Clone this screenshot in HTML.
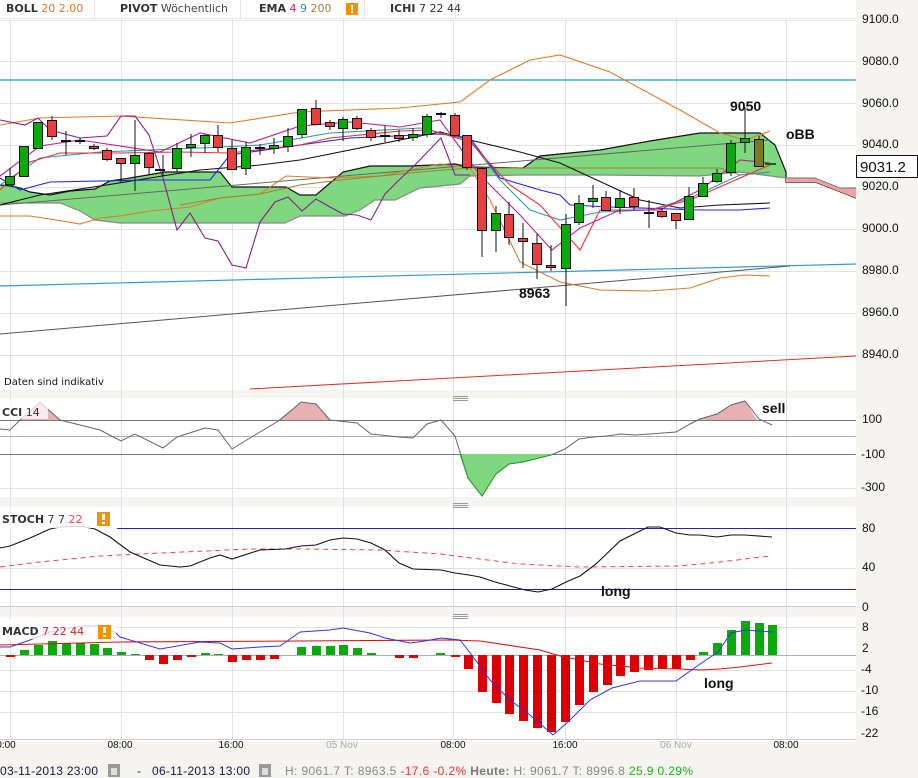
<!DOCTYPE html>
<html><head><meta charset="utf-8"><style>
html,body{margin:0;padding:0;background:#f5f4f0;width:918px;height:778px;overflow:hidden}
svg{display:block}
.ax{font-family:"Liberation Sans",sans-serif;font-size:12px;fill:#111}
.tl{font-family:"Liberation Sans",sans-serif;font-size:10px;fill:#111}
.hd{font-family:"DejaVu Sans",sans-serif;font-size:11px}
.an{font-family:"Liberation Sans",sans-serif;font-size:14px;font-weight:bold;fill:#111}
</style></head><body>
<svg width="918" height="778" viewBox="0 0 918 778" xmlns="http://www.w3.org/2000/svg">
<rect x="0" y="0" width="918" height="778" fill="#f5f4f0"/>
<rect x="0" y="0" width="856" height="390" fill="#fff"/>
<rect x="0" y="398" width="856" height="99" fill="#fff"/>
<rect x="0" y="507" width="856" height="100" fill="#fff"/>
<rect x="0" y="617" width="856" height="124" fill="#fff"/>
<g stroke="#e2e2e2" stroke-width="1">
<line x1="10.5" y1="18" x2="10.5" y2="740"/><line x1="121.5" y1="18" x2="121.5" y2="740"/><line x1="232.5" y1="18" x2="232.5" y2="740"/><line x1="343.5" y1="18" x2="343.5" y2="740"/><line x1="453.5" y1="18" x2="453.5" y2="740"/><line x1="565.5" y1="18" x2="565.5" y2="740"/><line x1="676.5" y1="18" x2="676.5" y2="740"/><line x1="786.5" y1="18" x2="786.5" y2="740"/>
<line x1="0" y1="20.5" x2="856" y2="20.5"/><line x1="0" y1="61.5" x2="856" y2="61.5"/><line x1="0" y1="103.5" x2="856" y2="103.5"/><line x1="0" y1="145.5" x2="856" y2="145.5"/><line x1="0" y1="187.5" x2="856" y2="187.5"/><line x1="0" y1="229.5" x2="856" y2="229.5"/><line x1="0" y1="271.5" x2="856" y2="271.5"/><line x1="0" y1="313.5" x2="856" y2="313.5"/><line x1="0" y1="355.5" x2="856" y2="355.5"/>
<line x1="0" y1="488.5" x2="856" y2="488.5"/>
<line x1="0" y1="568.5" x2="856" y2="568.5"/>
<line x1="0" y1="627.5" x2="856" y2="627.5"/><line x1="0" y1="670.5" x2="856" y2="670.5"/><line x1="0" y1="691.5" x2="856" y2="691.5"/><line x1="0" y1="712.5" x2="856" y2="712.5"/>
</g>
<g stroke="#c8ccd4"><line x1="0" y1="739.5" x2="856" y2="739.5"/><line x1="0" y1="606.5" x2="856" y2="606.5"/></g>
<g stroke="#999" stroke-width="1"><path d="M453 396.5h15M453 398.5h15M453 400.5h15M453 503.5h15M453 505.5h15M453 507.5h15M453 614.5h15M453 616.5h15M453 618.5h15"/></g>

<rect x="0" y="0" width="856" height="18" fill="#fff"/>
<g stroke="#e6e6e6"><line x1="94.5" y1="0" x2="94.5" y2="18"/><line x1="240.5" y1="0" x2="240.5" y2="18"/><line x1="364.5" y1="0" x2="364.5" y2="18"/><line x1="455.5" y1="0" x2="455.5" y2="18"/><line x1="0" y1="18.5" x2="856" y2="18.5"/></g>
<text x="6" y="12" class="hd"><tspan fill="#333" font-weight="bold">BOLL</tspan><tspan fill="#e07820"> 20 </tspan><tspan fill="#e07820"> 2.00</tspan></text>
<text x="120" y="12" class="hd"><tspan fill="#333" font-weight="bold">PIVOT</tspan><tspan fill="#444"> Wöchentlich</tspan></text>
<text x="259" y="12" class="hd"><tspan fill="#333" font-weight="bold">EMA</tspan><tspan fill="#c0208a">  4</tspan><tspan fill="#2a8ab0">  9</tspan><tspan fill="#a08030">  200</tspan></text>
<rect x="346" y="3" width="12" height="12" fill="#f29200"/><rect x="351" y="5" width="2" height="5" fill="#fff"/><rect x="351" y="11" width="2" height="2" fill="#fff"/>
<text x="390" y="12" class="hd"><tspan fill="#333" font-weight="bold">ICHI</tspan><tspan fill="#333">  7  22  44</tspan></text>

<line x1="0" y1="80" x2="856" y2="80" stroke="#1a9ad6" stroke-width="1.2"/>
<line x1="0" y1="286" x2="856" y2="264" stroke="#2d9ad8" stroke-width="1.2"/>
<line x1="0" y1="334" x2="790" y2="266" stroke="#555" stroke-width="1"/>
<line x1="250" y1="389" x2="856" y2="356" stroke="#e03020" stroke-width="1"/>

<polygon fill="#7fd87f" points="0,185 10,186 20,188 30,192 50,195 70,191 95,189 110,181 130,178 165,172 220,172 232,187 286,187 300,195 316,195 343,172 370,166 410,166 455,164 470,167 523,168 540,156 600,150 650,141 700,133 740,133 760,133 775,145 786,172 786,178 740,172 700,176 600,175 520,175 470,176 460,184 420,188 395,200 375,200 360,210 345,216 300,216 285,223 120,223 95,220 80,211 60,203 0,203"/>
<polyline fill="none" stroke="#111" stroke-width="1.2" points="0,185 10,186 20,188 30,192 50,195 70,191 95,189 110,181 130,178 165,172 220,172 232,187 286,187 300,195 316,195 343,172 370,166 410,166 455,164 470,167 523,168 540,156 600,150 650,141 700,133 740,133 760,133 775,145 786,172 786,182 815,182 856,198"/>
<polygon fill="#f4a0a0" points="786,178 815,178 840,188 856,188 856,198 815,182 786,182"/>
<polyline fill="none" stroke="#888" stroke-width="1.2" points="0,203 60,203 80,211 95,220 120,223 285,223 300,216 345,216 360,210 375,200 395,200 420,188 460,184 470,176 520,175 600,175 700,176 740,172 786,178 815,178 840,188 856,188"/>
<line x1="0" y1="205" x2="770" y2="140" stroke="#666" stroke-width="1"/>

<g fill="none" stroke="#e07a28" stroke-width="1.1">
<polyline points="0,125 40,118 120,116 230,123 300,112 400,108 460,102 490,80 530,60 560,55 610,72 680,110 720,133 745,140 770,131"/>
<polyline points="0,216 30,216 50,219 80,224 100,218 120,216 150,211 190,207 220,198 260,194 286,176 330,178 380,176 410,170 440,164 470,168 490,200 520,262 560,282 600,290 650,291 690,288 720,278 745,275 770,276"/>
<polyline stroke="#a08030" points="180,205 220,198 260,194 300,185 340,180 420,172 470,168 720,168 740,175 770,172"/>
</g>
<polyline fill="none" stroke="#8a1a8a" stroke-width="1.1" points="0,120 25,125 38,118 50,130 80,138 107,136 121,116 135,116 149,135 163,178 177,230 190,213 205,238 218,241 232,265 246,268 260,222 275,202 288,197 302,211 316,199 330,207 343,214 357,215 371,220 385,194 400,179 414,166 441,138 455,175 470,175"/>
<g fill="none" stroke-width="1.1">
<polyline stroke="#111" points="0,205 40,195 100,186 150,178 200,170 260,165 300,160 440,132 470,140 520,152 560,163 640,200 680,208 720,205 770,203"/>
<polyline stroke="#2222ee" points="0,178 20,190 50,182 150,180 210,180 230,155 300,145 350,138 440,134 470,138 500,178 540,190 560,195 570,205 610,207 700,210 740,210 770,208"/>
<polyline stroke="#2a9ab0" points="0,185 40,158 100,152 200,148 260,145 290,140 330,133 420,128 470,140 500,180 530,210 560,220 600,212 650,210 690,198 740,175 770,172"/>
<polyline stroke="#ff2a2a" points="0,190 30,162 60,153 120,153 180,152 230,153 300,145 330,138 400,131 430,130 470,142 510,185 540,205 580,250 600,210 650,210 690,200 740,178 770,165"/>
<polyline stroke="#c0208a" points="0,176 40,146 80,140 160,152 200,133 250,143 300,126 350,122 400,127 440,120 480,175 520,215 552,250 580,228 620,210 660,210 700,190 740,160 770,163"/>
</g>

<g stroke="#111" stroke-width="1">
<path d="M10 168V186M24 146V176M38 122V148M52 116V140M66 131V155M80 138V144M94 144V150M107 148V161M121 158V182M135 120V191M149 152V174M163 155V176M177 143V172M191 134V157M205 134V153M218 125V152M232 140V170M246 142V175M260 144V155M274 138V154M288 128V152M302 109V138M316 100V124M330 120V130M343 117V141M357 116V130M371 128V141M385 126V142M399 130V142M413 128V141M427 114V137M441 112V118M455 113V137M467 135V170M482 168V257M496 206V252M509 202V245M523 223V268M537 234V279M551 245V271M566 214V306M579 195V225M593 185V208M606 191V210M620 190V214M634 188V210M649 200V228M662 208V218M676 213V229M689 187V219M703 177V196M717 169V183M731 140V176M745 107V153M759 136V166"/>
</g>
<g stroke="#111" stroke-width="1">
<g fill="#0aaa0a">
<rect x="5.5" y="176.5" width="9" height="8"/><rect x="19.5" y="146.5" width="9" height="30"/><rect x="33.5" y="122.5" width="9" height="26"/><rect x="130.5" y="155.5" width="9" height="8"/><rect x="172.5" y="148.5" width="9" height="20"/><rect x="186.5" y="144.5" width="9" height="3"/><rect x="200.5" y="135.5" width="9" height="8"/><rect x="241.5" y="147.5" width="9" height="21"/><rect x="269.5" y="145.5" width="9" height="3"/><rect x="283.5" y="136.5" width="9" height="10"/><rect x="297.5" y="109.5" width="9" height="25"/><rect x="338.5" y="119.5" width="9" height="9"/><rect x="408.5" y="134.5" width="9" height="3"/><rect x="422.5" y="116.5" width="9" height="18"/><rect x="491.5" y="213.5" width="9" height="17"/><rect x="561.5" y="224.5" width="9" height="44"/><rect x="574.5" y="203.5" width="9" height="19"/><rect x="588.5" y="198.5" width="9" height="3"/><rect x="615.5" y="198.5" width="9" height="9"/><rect x="684.5" y="196.5" width="9" height="23"/><rect x="698.5" y="183.5" width="9" height="13"/><rect x="712.5" y="173.5" width="9" height="8"/><rect x="726.5" y="143.5" width="9" height="29"/><rect x="740.5" y="138.5" width="9" height="4"/>
</g>
<g fill="#e84040">
<rect x="47.5" y="120.5" width="9" height="16"/><rect x="89.5" y="146.5" width="9" height="2"/><rect x="102.5" y="150.5" width="9" height="9"/><rect x="116.5" y="158.5" width="9" height="5"/><rect x="144.5" y="153.5" width="9" height="14"/><rect x="213.5" y="135.5" width="9" height="12"/><rect x="227.5" y="148.5" width="9" height="21"/><rect x="311.5" y="108.5" width="9" height="16"/><rect x="325.5" y="122.5" width="9" height="4"/><rect x="352.5" y="118.5" width="9" height="10"/><rect x="366.5" y="130.5" width="9" height="7"/><rect x="394.5" y="135.5" width="9" height="3"/><rect x="450.5" y="115.5" width="9" height="20"/><rect x="462.5" y="135.5" width="9" height="32"/><rect x="477.5" y="168.5" width="9" height="62"/><rect x="504.5" y="214.5" width="9" height="23"/><rect x="518.5" y="238.5" width="9" height="3"/><rect x="532.5" y="243.5" width="9" height="21"/><rect x="546.5" y="265.5" width="9" height="2"/><rect x="601.5" y="197.5" width="9" height="13"/><rect x="629.5" y="197.5" width="9" height="9"/><rect x="657.5" y="211.5" width="9" height="5"/><rect x="671.5" y="213.5" width="9" height="7"/>
</g>
<rect x="754.5" y="139.5" width="9" height="27" fill="#7a7a22"/>
</g>
<g stroke="#111" stroke-width="2"><path d="M61 141h10M75 141h10M155 170h10M255 148h10M380 136h10M436 114h10M644 213h10"/></g>
<line x1="765" y1="164" x2="776" y2="164" stroke="#116611" stroke-width="2"/>

<text x="730" y="111" class="an">9050</text>
<text x="786" y="139" class="an">oBB</text>
<text x="519" y="298" class="an">8963</text>
<text x="4" y="385" font-family="DejaVu Sans,sans-serif" font-size="10" fill="#111">Daten sind indikativ</text>

<g class="ax">
<text x="862" y="23">9100.0</text><text x="862" y="65">9080.0</text><text x="862" y="107">9060.0</text><text x="862" y="148">9040.0</text><text x="862" y="190">9020.0</text><text x="862" y="232">9000.0</text><text x="862" y="274">8980.0</text><text x="862" y="316">8960.0</text><text x="862" y="358">8940.0</text>
</g>
<rect x="856.5" y="155.5" width="61" height="22" fill="#fff" stroke="#111"/>
<text x="860" y="172" font-family="Liberation Sans,sans-serif" font-size="15" fill="#111">9031.2</text>

<g stroke-width="1">
<line x1="0" y1="420.5" x2="856" y2="420.5" stroke="#77778a"/>
<line x1="0" y1="436.5" x2="856" y2="436.5" stroke="#aab0bb"/>
<line x1="0" y1="454.5" x2="856" y2="454.5" stroke="#77778a"/>
</g>
<polygon fill="#e8b0b0" points="20,420 40,402 60,420"/>
<polygon fill="#e8b0b0" points="278,420 301,402 316,404 330,420"/>
<polygon fill="#e8b0b0" points="698,420 717,414 731,405 745,401 757,420"/>
<polygon fill="#7fd87f" points="460,454 468,478 482,496 496,474 509,464 523,462 551,455 553,454"/>
<polyline fill="none" stroke="#666" stroke-width="1" points="0,429 10,430 20,420 40,402 60,420 100,430 121,441 135,434 163,448 177,437 205,428 218,430 232,449 250,438 280,420 301,402 316,404 330,420 357,423 371,434 399,437 413,438 427,424 441,420 455,436 468,478 482,496 496,474 509,464 523,462 551,455 565,449 579,439 593,437 607,436 621,434 635,435 650,434 676,432 690,424 700,419 717,414 731,405 745,401 759,419 772,425"/>
<polyline fill="none" stroke="#2aa02a" stroke-width="1" points="460,454 468,478 482,496 496,474 509,464 523,462 551,455"/>
<rect x="0" y="400" width="48" height="19" fill="#fff" opacity="0.75"/>
<text x="2" y="416" class="hd" fill="#333"><tspan font-weight="bold" fill="#333">CCI</tspan><tspan fill="#333"> 14</tspan></text>
<text x="762" y="413" class="an">sell</text>
<g class="ax"><text x="862" y="423">100</text><text x="861" y="458">-100</text><text x="861" y="491">-300</text></g>

<line x1="117" y1="528.5" x2="856" y2="528.5" stroke="#2222cc"/>
<line x1="0" y1="589.5" x2="856" y2="589.5" stroke="#2222cc"/>
<polyline fill="none" stroke="#ff4040" stroke-width="1" stroke-dasharray="5,4" points="0,567 40,562 100,556 160,553 250,549 300,549 380,550 440,554 520,564 580,567 680,566 720,562 770,556"/>
<polyline fill="none" stroke="#111" stroke-width="1.1" points="0,548 10,546 30,538 50,529 60,527 80,526 95,529 110,537 130,552 160,565 180,567 190,566 210,558 220,555 232,559 260,550 285,549 301,546 316,545 330,540 343,538 357,539 371,543 385,550 399,563 413,569 441,570 455,573 469,575 480,577 495,582 510,586 525,590 538,592 552,589 566,582 580,576 596,564 620,541 648,527 660,527 676,533 690,535 700,535 717,537 731,535 745,535 772,537"/>
<rect x="0" y="509" width="116" height="19" fill="#fff" opacity="0.8"/>
<text x="2" y="523" class="hd"><tspan font-weight="bold" fill="#333">STOCH</tspan><tspan fill="#333">  7  7</tspan><tspan fill="#ff4050">  22</tspan></text>
<rect x="97" y="512" width="13" height="14" fill="#f29200"/><rect x="102" y="514" width="3" height="6" fill="#fff"/><rect x="102" y="522" width="3" height="2" fill="#fff"/>
<text x="601" y="596" class="an">long</text>
<g class="ax"><text x="862" y="532">80</text><text x="862" y="571">40</text><text x="862" y="611">0</text></g>

<line x1="0" y1="655.5" x2="856" y2="655.5" stroke="#aab0bb"/>
<g fill="#0aaa0a">
<rect x="20" y="650" width="9" height="5"/><rect x="34" y="645" width="9" height="10"/><rect x="48" y="641" width="9" height="14"/><rect x="62" y="643" width="9" height="12"/><rect x="76" y="643" width="9" height="12"/><rect x="90" y="644" width="9" height="11"/><rect x="103" y="648" width="9" height="7"/><rect x="117" y="652" width="9" height="3"/><rect x="131" y="654" width="9" height="1"/><rect x="201" y="653" width="9" height="2"/><rect x="214" y="654" width="9" height="1"/><rect x="297" y="647" width="9" height="8"/><rect x="312" y="646" width="9" height="9"/><rect x="326" y="646" width="9" height="9"/><rect x="339" y="645" width="9" height="10"/><rect x="353" y="648" width="9" height="7"/><rect x="367" y="653" width="9" height="2"/><rect x="436" y="653" width="9" height="2"/>
<rect x="699" y="652" width="9" height="3"/><rect x="713" y="643" width="9" height="12"/><rect x="727" y="630" width="9" height="25"/><rect x="741" y="621" width="9" height="34"/><rect x="755" y="623" width="9" height="32"/><rect x="768" y="625" width="9" height="30"/>
</g>
<g fill="#dd0000">
<rect x="6" y="655" width="9" height="2"/><rect x="145" y="655" width="9" height="5"/><rect x="159" y="655" width="9" height="9"/><rect x="173" y="655" width="9" height="5"/><rect x="187" y="655" width="9" height="2"/><rect x="228" y="655" width="9" height="7"/><rect x="242" y="655" width="9" height="5"/><rect x="256" y="655" width="9" height="5"/><rect x="270" y="655" width="9" height="4"/><rect x="395" y="655" width="9" height="3"/><rect x="409" y="655" width="9" height="3"/>
<rect x="451" y="655" width="9" height="2"/><rect x="464" y="655" width="9" height="14"/><rect x="478" y="655" width="9" height="37"/><rect x="492" y="655" width="9" height="48"/><rect x="505" y="655" width="9" height="59"/><rect x="519" y="655" width="9" height="66"/><rect x="533" y="655" width="9" height="73"/><rect x="547" y="655" width="9" height="77"/><rect x="561" y="655" width="9" height="67"/><rect x="575" y="655" width="9" height="50"/><rect x="589" y="655" width="9" height="37"/><rect x="603" y="655" width="9" height="30"/><rect x="616" y="655" width="9" height="21"/><rect x="630" y="655" width="9" height="17"/><rect x="644" y="655" width="9" height="15"/><rect x="658" y="655" width="9" height="14"/><rect x="672" y="655" width="9" height="14"/><rect x="686" y="655" width="9" height="5"/>
</g>
<polyline fill="none" stroke="#dd1010" stroke-width="1.1" points="0,645 120,642 300,641 450,640 480,641 540,650 560,656 600,664 640,668 680,669 700,670 720,669 740,667 772,663"/>
<polyline fill="none" stroke="#3333ee" stroke-width="1" points="0,647 10,647 30,640 50,632 80,626 100,626 115,632 120,637 160,649 200,642 220,643 232,649 260,647 280,646 300,632 330,630 343,628 370,633 385,638 410,643 425,641 441,638 460,640 474,658 490,680 510,700 530,715 553,735 570,720 590,700 612,688 640,681 676,681 700,664 718,652 731,633 745,630 772,632"/>
<rect x="0" y="620" width="116" height="19" fill="#fff" opacity="0.75"/>
<text x="2" y="635" class="hd"><tspan font-weight="bold" fill="#333">MACD</tspan><tspan fill="#dd2020">  7  22  44</tspan></text>
<rect x="98" y="625" width="13" height="14" fill="#f29200"/><rect x="103" y="627" width="3" height="6" fill="#fff"/><rect x="103" y="635" width="3" height="2" fill="#fff"/>
<text x="704" y="688" class="an">long</text>
<g class="ax"><text x="862" y="631">8</text><text x="862" y="652">2</text><text x="861" y="673">-4</text><text x="861" y="694">-10</text><text x="861" y="715">-16</text><text x="861" y="737">-22</text></g>

<g class="tl" text-anchor="middle">
<text x="6" y="748">0:00</text><text x="120" y="748">08:00</text><text x="231" y="748">16:00</text><text x="342" y="748" fill="#aaa">05 Nov</text><text x="453" y="748">08:00</text><text x="565" y="748">16:00</text><text x="676" y="748" fill="#aaa">06 Nov</text><text x="786" y="748">08:00</text>
</g>

<g font-family="Liberation Sans,sans-serif" font-size="12">
<text x="0" y="775" fill="#1a1a3a" textLength="98">03-11-2013 23:00</text>
<text x="137" y="775" fill="#1a1a3a">-</text>
<text x="152" y="775" fill="#1a1a3a" textLength="98">06-11-2013 13:00</text>
<text x="285" y="775" fill="#888" textLength="408">H: 9061.7  T: 8963.5 <tspan fill="#ee3333">-17.6  -0.2%</tspan> <tspan fill="#777" font-weight="bold">Heute:</tspan> H: 9061.7  T: 8996.8 <tspan fill="#11bb11">25.9  0.29%</tspan></text>
</g>
<g fill="#999"><rect x="108" y="764" width="12" height="13"/><rect x="259" y="764" width="12" height="13"/></g>
<g fill="#ddd"><rect x="111" y="768" width="6" height="7"/><rect x="262" y="768" width="6" height="7"/></g>
</svg>
</body></html>
